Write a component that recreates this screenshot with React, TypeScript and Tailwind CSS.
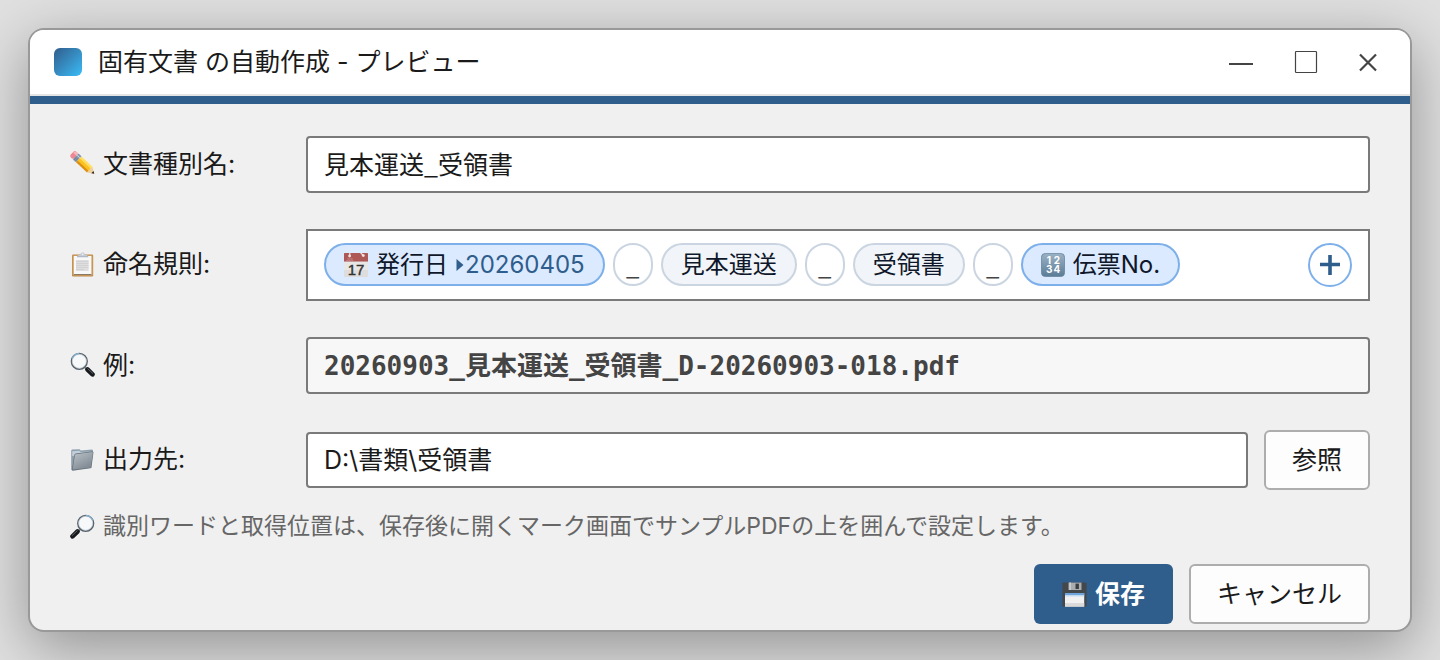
import type { ReactNode } from 'react'

function PencilIcon() {
  return (
    <svg viewBox="0 0 25 25" className="size-[25px] shrink-0" aria-hidden="true">
      <g transform="translate(3.2 3.2) rotate(43)">
        <rect x="-1.500" y="-4" width="5" height="8" rx="2.400" fill="#ee8792" />
        <path d="M-.8-2.600a2.400 2.400 0 0 1 2.400-1.200h1.800v2.600H-1z" fill="#f9b6bb" />
        <rect x="3.200" y="-4" width="4.400" height="8" fill="#8592a8" />
        <rect x="3.200" y="-2.800" width="4.400" height="2" fill="#c9d2df" />
        <path d="M4.600-4v8M6.200-4v8" stroke="#66728a" strokeWidth=".5" />
        <rect x="7.600" y="-4" width="15" height="2.800" fill="#ffdf62" />
        <rect x="7.600" y="-1.400" width="15" height="3.200" fill="#fcc21f" />
        <rect x="7.600" y="1.600" width="15" height="2.400" fill="#dc9210" />
        <path d="M22.600-4l6.200 4-6.200 4z" fill="#efcf9c" />
        <path d="M26.300-1.600L28.800 0l-2.500 1.600z" fill="#2c2620" />
      </g>
    </svg>
  )
}

function ClipboardIcon() {
  return (
    <svg viewBox="0 0 25 25" className="size-[25px] shrink-0" aria-hidden="true">
      <rect x="2" y="2.600" width="21.200" height="21.800" rx="1.200" fill="#bd8a4c" />
      <rect x="2.600" y="3.200" width="20" height="20.400" rx=".8" fill="#cf9f60" />
      <rect x="3.800" y="4" width="17.600" height="18.800" fill="#f8f8f8" />
      <rect x="3.800" y="22" width="17.600" height="1" fill="#8a7a68" />
      <rect x="6" y="8" width="12.600" height="11" fill="#dededf" />
      <path d="M6 9.500h12.600M6 11.500h12.600M6 13.500h12.600M6 15.500h12.600M6 17.500h8" stroke="#cfcfd2" strokeWidth=".8" />
      <path d="M7 5c0-2 1.800-1.900 3.200-2.300.6-1.700 1.100-2.100 2.400-2.100s1.800.4 2.400 2.100c1.400.4 3.200.3 3.200 2.300z" fill="#c3ccd8" />
      <path d="M7 4.800h11.200" stroke="#9aa5b4" strokeWidth=".7" />
      <circle cx="12.600" cy="2.300" r=".9" fill="#eef1f5" />
    </svg>
  )
}

function MagnifierIcon({ flip = false }: { flip?: boolean }) {
  return (
    <svg viewBox="0 0 25 25" className={flip ? 'size-[25px] shrink-0 -scale-x-100' : 'size-[25px] shrink-0'} aria-hidden="true">
      <path d="M14.500 15l3 3" stroke="#8b929a" strokeWidth="2" />
      <path d="M17.500 17.500l5 4.800" stroke="#17191c" strokeWidth="4.600" strokeLinecap="round" />
      <path d="M17.800 16.800l5 4.600" stroke="#5d666e" strokeWidth="1" strokeLinecap="round" />
      <circle cx="9.300" cy="9.300" r="7.900" fill="#f6f8f9" stroke="#55616b" strokeWidth="1.500" />
      <circle cx="9.300" cy="9.300" r="7" fill="none" stroke="#c3ccd4" strokeWidth=".7" />
      <path d="M2.200 6.500a7.900 7.900 0 0 1 7-5.100" stroke="#86b0cd" strokeWidth="1.300" fill="none" />
    </svg>
  )
}

function FolderIcon() {
  return (
    <svg viewBox="0 0 25 25" className="size-[25px] shrink-0" aria-hidden="true">
      <defs>
        <linearGradient id="folder-front" x1="0" y1="0" x2=".6" y2="1">
          <stop offset="0" stopColor="#bcc3c9" />
          <stop offset="1" stopColor="#7f8992" />
        </linearGradient>
      </defs>
      <path d="M1.200 3.600l.8-1 7.500-.4 1.300 1.300 11.400-.9.800 1-2.200 16.200-18.800 3.400-.8-.8z" fill="#8fa0ae" />
      <path d="M2.200 4.200l7.200-.4 1.300 1.300 10.600-.7v3L2.200 9z" fill="#c2ced8" />
      <path d="M1.800 22.800L4.400 7.400l1.200-.8 17-2.300.9 1-2 15-1 .9-18 2.500z" fill="#66727d" />
      <path d="M2.600 22.600L5 7.800l.8-.6 16.600-2.200.5.500-2 14.600-.7.600z" fill="url(#folder-front)" />
    </svg>
  )
}

function CalendarIcon() {
  return (
    <svg viewBox="0 0 24 24" className="size-6 shrink-0" aria-hidden="true">
      <rect width="24" height="24" rx=".8" fill="#dedddc" />
      <rect y="9" width="24" height="8" fill="#e8e7e5" />
      <path d="M.8 0h22.400a.8.8 0 0 1 .8.8V8.600H0V.8A.8.8 0 0 1 .8 0z" fill="#ad5757" />
      <path d="M5.800.2v2.400M17 .4l2.300 1.800" stroke="#f6eeee" strokeWidth="1.100" strokeLinecap="round" />
      <circle cx="5.600" cy="3" r="1.400" fill="#f3e4e4" />
      <circle cx="19.300" cy="2.600" r="1.400" fill="#f3e4e4" />
      <text x="6" y="8" textAnchor="middle" className="font-['Inter'] text-[4px]" fill="#dcaaaa">JUL</text>
      <text x="12" y="21.800" textAnchor="middle" className="font-['Liberation_Sans'] text-[15px]" fill="#333" stroke="#333" strokeWidth=".4">17</text>
    </svg>
  )
}

function NumbersIcon() {
  return (
    <svg viewBox="0 0 24 24" className="size-6 shrink-0" aria-hidden="true">
      <defs>
        <linearGradient id="numbers-bg" x1="0" y1="0" x2="0" y2="1">
          <stop offset="0" stopColor="#9cb2c5" />
          <stop offset="1" stopColor="#5b7c97" />
        </linearGradient>
      </defs>
      <rect x=".4" y=".4" width="23.200" height="23.200" rx="4" fill="url(#numbers-bg)" stroke="#64829b" strokeWidth=".8" />
      <g className="font-['Inter'] text-[10px] font-bold" fill="#fff" textAnchor="middle">
        <text x="7.800" y="10.800">1</text>
        <text x="15.800" y="10.800">2</text>
        <text x="8.200" y="20">3</text>
        <text x="15.800" y="20">4</text>
      </g>
    </svg>
  )
}

function FloppyIcon() {
  return (
    <svg viewBox="0 0 25 25" className="size-[25px] shrink-0" aria-hidden="true">
      <path d="M1 .6h22.600l1 1v23H.4V1.200z" fill="#45484b" />
      <path d="M6.500.6h13v7.400h-13z" fill="#a9adb0" />
      <path d="M13.500 1.600h3.400v5.400h-3.400z" fill="#3c3f42" />
      <path d="M7.200.6h1.800v7.400H7.200z" fill="#c9cccf" />
      <path d="M3 11h19.200v13.600H3z" fill="#f1f1f1" />
      <path d="M3 11h19.200v2.200H3z" fill="#6fa5da" />
      <path d="M3 13.200h19.200v1.200H3z" fill="#bfd8f0" />
      <path d="M3 21h19.200v3.600H3z" fill="#dadada" />
    </svg>
  )
}

function Chip({ variant = 'text', children }: { variant?: 'token' | 'text' | 'separator'; children: ReactNode }) {
  const styles = {
    token: 'border-[#7db0ea] bg-[#dbeafe] px-[18px] text-[#0f172a]',
    text: 'border-[#cbd5e1] bg-[#f1f5f9] px-[18px] text-[#0f172a]',
    separator: "w-10 justify-center border-[#cbd5e1] bg-white font-['Noto_Sans_CJK_JP',sans-serif] text-[#444]",
  }
  return (
    <button
      type="button"
      className={`flex h-[43px] shrink-0 items-center gap-2 rounded-full border-2 text-2xl leading-none ${styles[variant]}`}
    >
      {children}
    </button>
  )
}

function Row({ icon, label, htmlFor, children }: { icon: ReactNode; label: string; htmlFor: string; children: ReactNode }) {
  return (
    <div className="flex items-center gap-4">
      <label htmlFor={htmlFor} className="flex w-[220px] shrink-0 items-center gap-2 pb-0.5">
        {icon}
        {label}
      </label>
      {children}
    </div>
  )
}

const field = 'min-w-0 flex-1 rounded-sm border-2 border-[#7a7a7a] px-4 pb-1 outline-none'
const button = 'h-[60px] shrink-0 rounded-md border-2 border-[#adadad] bg-[#fdfdfd] px-[26px]'

export default function App() {
  return (
    <div className="min-h-screen bg-[#e0e0e0] p-7 font-['Inter','Noto_Sans_CJK_JP',sans-serif] text-[25px] leading-8 text-[#1a1a1a]">
      <main className="overflow-hidden rounded-2xl border-2 border-[#999] bg-[#f0f0f0] shadow-[0_16px_60px_rgba(0,0,0,0.35)]">
        <header className="flex h-[66px] items-center border-b-2 border-[#e5e5e5] bg-white pr-8 pl-6">
          <span className="size-7 rounded-md bg-linear-135 from-[#2f5d8c] to-[#38bdf8]" />
          <h1 className="ml-4 flex-1">固有文書 の自動作成 - プレビュー</h1>
          <div className="flex items-center gap-10 text-[#444]">
            <button type="button" aria-label="最小化">
              <svg viewBox="0 0 26 26" className="size-[26px]" fill="none" stroke="currentColor" strokeWidth="2">
                <path d="M1 15h24" />
              </svg>
            </button>
            <button type="button" aria-label="最大化">
              <svg viewBox="0 0 24 24" className="size-6" fill="none" stroke="currentColor" strokeWidth="1.200">
                <rect x="1.500" y="1.500" width="21" height="21" rx=".8" />
              </svg>
            </button>
            <button type="button" aria-label="閉じる">
              <svg viewBox="0 0 20 20" className="size-5" fill="none" stroke="currentColor" strokeWidth="2.200">
                <path d="M2 2.500l16 16M18 2.500l-16 16" />
              </svg>
            </button>
          </div>
        </header>
        <div className="h-2 bg-[#2f5d8c]" />

        <form className="px-10 pt-8 pb-1.5" onSubmit={(e) => e.preventDefault()}>
          <div className="flex flex-col gap-9">
            <Row icon={<PencilIcon />} label="文書種別名:" htmlFor="doc-type">
              <input
                id="doc-type"
                defaultValue="見本運送_受領書"
                className={`${field} h-[57px] bg-white font-['Noto_Sans_CJK_JP',sans-serif]`}
              />
            </Row>

            <Row icon={<ClipboardIcon />} label="命名規則:" htmlFor="add-token">
              <div className="flex min-w-0 flex-1 items-start gap-2 border-2 border-[#7a7a7a] bg-white px-4 py-3">
                <Chip variant="token">
                  <CalendarIcon />
                  発行日
                  <span className="flex items-center text-[#2f5d8c]">
                    <svg viewBox="0 0 8 14" className="mr-px h-3.5 w-2" fill="currentColor" aria-hidden="true">
                      <path d="M.500 1l7 6-7 6z" />
                    </svg>
                    20260405
                  </span>
                </Chip>
                <Chip variant="separator">_</Chip>
                <Chip>見本運送</Chip>
                <Chip variant="separator">_</Chip>
                <Chip>受領書</Chip>
                <Chip variant="separator">_</Chip>
                <Chip variant="token">
                  <NumbersIcon />
                  伝票No.
                </Chip>
                <button
                  id="add-token"
                  type="button"
                  aria-label="追加"
                  className="ml-auto flex size-11 shrink-0 items-center justify-center rounded-full border-2 border-[#7db0ea] bg-white text-[#2f5d8c]"
                >
                  <svg viewBox="0 0 20 20" className="size-5" stroke="currentColor" strokeWidth="3.600">
                    <path d="M0 9.500h20M10 0v20" />
                  </svg>
                </button>
              </div>
            </Row>

            <Row icon={<MagnifierIcon />} label="例:" htmlFor="example">
              <input
                id="example"
                readOnly
                value="20260903_見本運送_受領書_D-20260903-018.pdf"
                className={`${field} h-[57px] bg-[#f7f7f7] font-['DejaVu_Sans_Mono','Noto_Sans_CJK_JP',monospace] text-[26px] font-bold text-[#444]`}
              />
            </Row>

            <Row icon={<FolderIcon />} label="出力先:" htmlFor="output">
              <input id="output" defaultValue="D:\書類\受領書" className={`${field} h-14 bg-white`} />
              <button type="button" className={button}>
                参照
              </button>
            </Row>
          </div>

          <p className="mt-5 flex items-center gap-2 text-[23px] text-[#666]">
            <MagnifierIcon flip />
            識別ワードと取得位置は、保存後に開くマーク画面でサンプルPDFの上を囲んで設定します。
          </p>

          <div className="mt-[22px] flex justify-end gap-4">
            <button type="submit" className="flex h-[60px] items-center gap-2 rounded-md bg-[#2f5d8c] px-7 font-bold text-white">
              <FloppyIcon />
              保存
            </button>
            <button type="button" className={button}>
              キャンセル
            </button>
          </div>
        </form>
      </main>
    </div>
  )
}
